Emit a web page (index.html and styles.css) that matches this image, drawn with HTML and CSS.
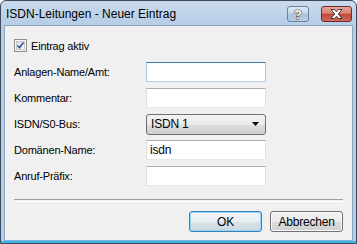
FILE: index.html
```html
<!DOCTYPE html>
<html>
<head>
<meta charset="utf-8">
<link rel="stylesheet" href="styles.css">
</head>
<body>
<div class="window">
  <div class="titlebar">
    <span class="title">ISDN-Leitungen - Neuer Eintrag</span>
    <div class="caption-buttons">
      <div class="cbtn help">
        <svg width="22" height="16" viewBox="0 0 22 16"><text x="11" y="13" text-anchor="middle" class="qmark">?</text></svg>
      </div>
      <div class="cbtn close">
        <svg width="31" height="16" viewBox="0 0 31 16"><path d="M10 3.5h3.5l2 2.3 2-2.3h3.5l-3.7 4.5 3.7 4.5h-3.5l-2-2.3-2 2.3h-3.5l3.7-4.5z" fill="#fff" stroke="#3b3b3b" stroke-width="1" stroke-linejoin="round"/></svg>
      </div>
    </div>
  </div>
  <div class="client">
    <label class="check-row">
      <svg class="checkbox" width="13" height="13" viewBox="0 0 13 13">
        <defs><linearGradient id="cb" x1="0" y1="0" x2="1" y2="1"><stop offset="0" stop-color="#dcdcdc"/><stop offset="1" stop-color="#ffffff"/></linearGradient></defs>
        <rect x="0.5" y="0.5" width="12" height="12" fill="#f4f4f4" stroke="#8e8f8f"/>
        <rect x="2.5" y="2.5" width="8" height="8" fill="url(#cb)" stroke="#c8c8c8"/>
        <path d="M3.5 6.5l2 2.2 4-5.2" fill="none" stroke="#2f4f9e" stroke-width="1.6"/>
      </svg>
      <span>Eintrag aktiv</span>
    </label>
    <div class="form">
      <span class="label">Anlagen-Name/Amt:</span>
      <div class="input focus"></div>
      <span class="label">Kommentar:</span>
      <div class="input"></div>
      <span class="label">ISDN/S0-Bus:</span>
      <div class="select"><span>ISDN 1</span><svg width="7" height="4" viewBox="0 0 7 4"><path d="M0 0h7l-3.5 4z" fill="#000"/></svg></div>
      <span class="label">Domänen-Name:</span>
      <div class="input"><span>isdn</span></div>
      <span class="label">Anruf-Präfix:</span>
      <div class="input"></div>
    </div>
    <div class="separator"></div>
    <div class="buttons">
      <div class="btn default">OK</div>
      <div class="btn">Abbrechen</div>
    </div>
  </div>
</div>
</body>
</html>
```
FILE: styles.css
```css
html, body {
  margin: 0;
  padding: 0;
  background: #ffffff;
}
.window {
  width: 357px;
  height: 244px;
  box-sizing: border-box;
  border: 1px solid #3c4a5a;
  border-radius: 6px 6px 0 0;
  background: linear-gradient(#c9dbee 0px, #b6cde6 24px, #b6cde6 200px, #a9d3ee 100%);
  padding: 0 3px 2px 3px;
  display: flex;
  flex-direction: column;
  font-family: "Liberation Sans", Arial, sans-serif;
  box-shadow: inset 0 -2px 0 #3fb3e6;
}
.titlebar {
  height: 24px;
  flex: none;
  display: flex;
  align-items: flex-start;
  justify-content: space-between;
}
.title {
  font-size: 12px;
  color: #000;
  padding: 6px 0 0 2px;
}
.caption-buttons {
  display: flex;
  gap: 12px;
  margin-top: 5px;
  margin-right: 1px;
}
.cbtn {
  height: 16px;
  box-sizing: border-box;
  border-radius: 3px;
  display: flex;
  align-items: center;
  justify-content: center;
}
.cbtn svg { display: block; margin: -1px; }
.help {
  width: 22px;
  border: 1px solid #6f8197;
  background: linear-gradient(#dfe9f5 0%, #c3d5ea 45%, #a9c1de 50%, #b9cfe8 100%);
}
.close {
  width: 31px;
  border: 1px solid #6e2a2a;
  background: linear-gradient(#e7a497 0%, #d7826f 45%, #c1473a 50%, #cf6b5a 100%);
}
.qmark {
  font-family: "Liberation Sans", Arial, sans-serif;
  font-weight: bold;
  font-size: 13px;
  fill: #fff;
  stroke: #3b3b3b;
  stroke-width: 1px;
  paint-order: stroke;
}
.client {
  flex: 1;
  background: #f0f0f0;
  border: 1px solid #8ea6c2;
  border-bottom-color: #7bb8dc;
  display: flex;
  flex-direction: column;
  padding: 13px 9px 8px 9px;
  font-size: 11px;
  letter-spacing: -0.2px;
  color: #000;
}
.check-row {
  display: flex;
  align-items: center;
  gap: 4px;
  height: 13px;
}
.checkbox { display: block; flex: none; }
.form {
  margin-top: 10px;
  display: grid;
  grid-template-columns: 132px 120px;
  grid-auto-rows: 20px;
  row-gap: 6px;
  align-items: center;
}
.label {
  line-height: 20px;
}
.input {
  height: 20px;
  box-sizing: border-box;
  background: #fff;
  border: 1px solid #e3e9ef;
  border-top-color: #abadb3;
  border-left-color: #dbdfe6;
  border-right-color: #dbdfe6;
  border-radius: 1px;
  display: flex;
  align-items: center;
  padding-left: 3px;
  font-size: 12px;
}
.input.focus {
  border-color: #b5cfe7;
  border-top-color: #3d7bad;
  border-left-color: #a4c9e3;
  border-right-color: #a4c9e3;
}
.select {
  height: 21px;
  box-sizing: border-box;
  border: 1px solid #707070;
  border-radius: 3px;
  background: linear-gradient(#f2f2f2 0%, #ebebeb 50%, #dddddd 51%, #cfcfcf 100%);
  display: flex;
  align-items: center;
  justify-content: space-between;
  padding: 0 6px 0 4px;
  font-size: 12px;
}
.select svg { display: block; }
.separator {
  margin-top: 13px;
  height: 1px;
  border-top: 1px solid #a0a0a0;
  border-bottom: 1px solid #ffffff;
}
.buttons {
  margin-top: 9px;
  display: flex;
  justify-content: flex-end;
  gap: 8px;
}
.btn {
  width: 73px;
  height: 21px;
  box-sizing: border-box;
  border: 1px solid #707070;
  border-radius: 3px;
  background: linear-gradient(#f2f2f2 0%, #ebebeb 50%, #dddddd 51%, #cfcfcf 100%);
  display: flex;
  align-items: center;
  justify-content: center;
  font-size: 12px;
  box-shadow: inset 0 0 0 1px #fcfcfc;
}
.btn.default {
  border-color: #3c7fb1;
  box-shadow: inset 0 0 0 1px #8fd6f6;
  background: linear-gradient(#f0f4f7 0%, #e8eef2 50%, #dae4ea 51%, #ccd8df 100%);
}
```
